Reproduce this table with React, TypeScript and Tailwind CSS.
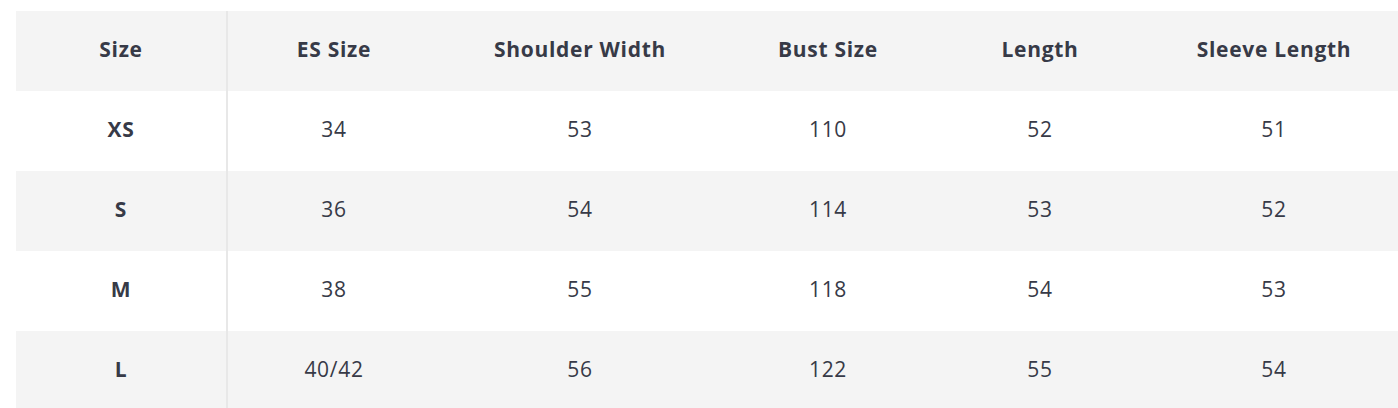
import React from "react";

const headers = ["Size", "ES Size", "Shoulder Width", "Bust Size", "Length", "Sleeve Length"];
const rows = [
  ["XS", "34", "53", "110", "52", "51"],
  ["S", "36", "54", "114", "53", "52"],
  ["M", "38", "55", "118", "54", "53"],
  ["L", "40/42", "56", "122", "55", "54"],
];
const widths = ["w-[212px]", "w-[212px]", "w-[280px]", "w-[216px]", "w-[208px]", "w-[260px]"];

export default function App() {
  return (
    <div className="w-[1398px] h-[408px] overflow-hidden bg-white pt-[11px] pl-4" style={{ fontFamily: "'Open Sans', 'Noto Sans', sans-serif" }}>
      <div className="w-[1388px] text-[#373a47] text-[21px] tracking-[0.7px] leading-none">
        <div className="flex h-[80px] bg-[#f4f4f4]">
          {headers.map((h, i) => (
            <div key={h} className={`${widths[i]} shrink-0 flex items-center justify-center pb-[3px] font-bold ${i === 0 ? "border-r-2 border-[#e8e8e8]" : ""}`}>
              {h}
            </div>
          ))}
        </div>
        {rows.map((r, ri) => (
          <div key={ri} className={`flex h-[80px] ${ri % 2 === 1 ? "bg-[#f4f4f4]" : "bg-white"}`}>
            {r.map((c, i) => (
              <div key={i} className={`${widths[i]} shrink-0 flex items-center justify-center pb-[3px] ${i === 0 ? "font-bold border-r-2 border-[#e8e8e8]" : ""}`}>
                {c}
              </div>
            ))}
          </div>
        ))}
      </div>
    </div>
  );
}
